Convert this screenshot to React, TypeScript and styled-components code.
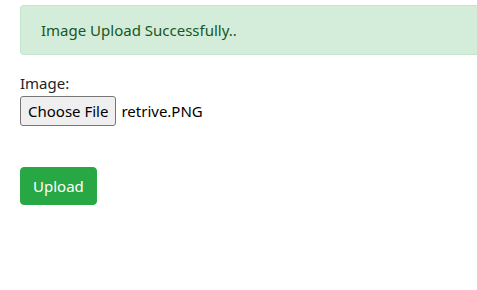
import React from 'react';
import styled, { createGlobalStyle } from 'styled-components';

const GlobalStyle = createGlobalStyle`
  html, body {
    margin: 0;
    padding: 0;
    background: #fff;
    overflow: hidden;
  }
  body {
    font-family: "Segoe UI", "Noto Sans", "Open Sans", sans-serif;
    font-size: 15px;
    line-height: 24px;
    color: #212529;
  }
`;

const Page = styled.div`
  padding: 5px 0 5px 20px;
`;

const Alert = styled.div`
  background: #d4edda;
  border: 1px solid #c3e6cb;
  border-right: none;
  color: #155724;
  border-radius: 4px 0 0 4px;
  padding: 12px 20px;
  margin-bottom: 16px;
`;

const Form = styled.form`
  display: flex;
  flex-direction: column;
  align-items: flex-start;
`;

const Label = styled.label`
  display: block;
`;

const FileRow = styled.div`
  display: flex;
  align-items: center;
  gap: 5px;
  margin-top: 1px;
`;

const FileButton = styled.span`
  display: inline-block;
  background: #efefef;
  border: 1px solid #767676;
  border-radius: 3px;
  padding: 2px 7px;
  line-height: 24px;
  color: #000;
`;

const FileName = styled.span`
  color: #000;
`;

const SubmitButton = styled.button`
  margin-top: 41px;
  font-family: inherit;
  font-size: 15px;
  line-height: 24px;
  color: #fff;
  background: #28a745;
  border: 1px solid #28a745;
  border-radius: 4px;
  padding: 6px 12px;
  cursor: pointer;
`;

const App = () => (
  <>
    <GlobalStyle />
    <Page>
      <Alert>Image Upload Successfully..</Alert>
      <Form onSubmit={(e) => e.preventDefault()}>
        <Label>Image:</Label>
        <FileRow>
          <FileButton>Choose File</FileButton>
          <FileName>retrive.PNG</FileName>
        </FileRow>
        <SubmitButton type="submit">Upload</SubmitButton>
      </Form>
    </Page>
  </>
);

export default App;
